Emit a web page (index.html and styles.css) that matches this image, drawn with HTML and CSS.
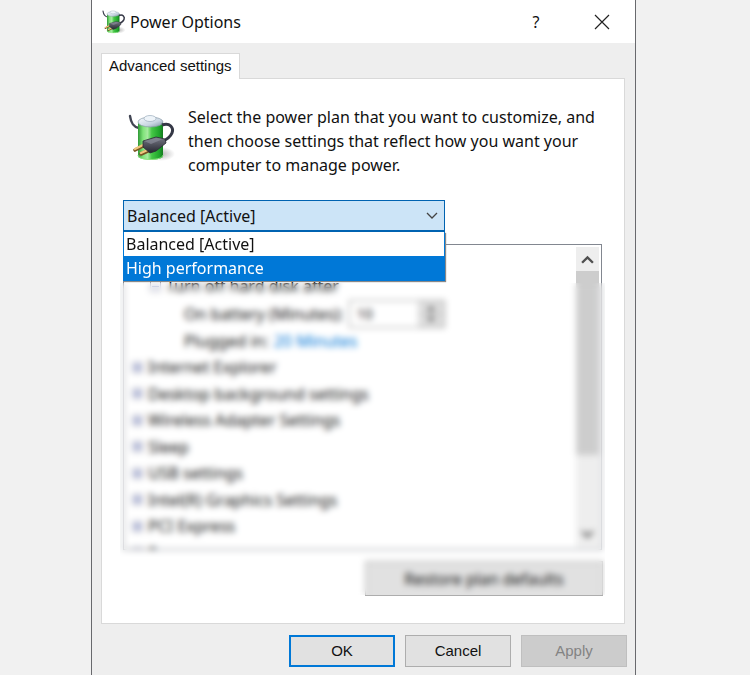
FILE: index.html
```html
<!DOCTYPE html>
<html lang="en">
<head>
<meta charset="utf-8">
<title>Power Options</title>
<link rel="stylesheet" href="styles.css">
</head>
<body>
<svg class="defs" width="0" height="0" aria-hidden="true">
  <defs>
    <linearGradient id="cell" x1="0" x2="1" y1="0" y2="0">
      <stop offset="0" stop-color="#2f9a35"/>
      <stop offset=".2" stop-color="#7fe37a"/>
      <stop offset=".38" stop-color="#a5eb9e"/>
      <stop offset=".55" stop-color="#45c746"/>
      <stop offset=".85" stop-color="#1fa52b"/>
      <stop offset="1" stop-color="#157a20"/>
    </linearGradient>
    <linearGradient id="cap" x1="0" x2="1" y1="0" y2="1">
      <stop offset="0" stop-color="#f8fbff"/>
      <stop offset=".6" stop-color="#c9d6e2"/>
      <stop offset="1" stop-color="#7f91a2"/>
    </linearGradient>
    <linearGradient id="plug" x1="0" x2="0" y1="0" y2="1">
      <stop offset="0" stop-color="#777985"/>
      <stop offset="1" stop-color="#25262f"/>
    </linearGradient>
    <radialGradient id="shade">
      <stop offset="0" stop-color="#888" stop-opacity=".6"/>
      <stop offset="1" stop-color="#888" stop-opacity="0"/>
    </radialGradient>
    <symbol id="battery" viewBox="0 0 48 48">
      <ellipse cx="33" cy="40" rx="14" ry="7" fill="url(#shade)"/>
      <path d="M2 2C3 9 5 13 11 14" fill="none" stroke="#414553" stroke-width="2.4" stroke-linecap="round"/>
      <path d="M10 8v34c0 5 25 5 25 0V8z" fill="url(#cell)"/>
      <path d="M10 41c0 6 25 6 25 0" fill="none" stroke="#8ce47f" stroke-width="1"/>
      <ellipse cx="22.500" cy="8" rx="12.500" ry="5" fill="url(#cap)" stroke="#8b9caa" stroke-width=".7"/>
      <ellipse cx="22" cy="4.500" rx="6" ry="3" fill="#eef4f9" stroke="#9cadbd" stroke-width=".7"/>
      <path d="M34 11c8-3 12 3 10 8-2 5-6 7-11 9" fill="none" stroke="#353846" stroke-width="3"/>
      <path d="M17 31L7 36M24 35l-11 5" stroke="#795423" stroke-width="3.600" stroke-linecap="round"/>
      <path d="M17 30L7 35M24 34l-11 5" stroke="#efc77d" stroke-width="2.200" stroke-linecap="round"/>
      <path d="M15 27l13-4 9 2 1 4-10 8-6 2-7-6z" fill="url(#plug)" stroke="#292a34" stroke-width=".8"/>
      <path d="M16 27l12-3 7 1-12 5z" fill="#8b8d99" opacity=".65"/>
    </symbol>
  </defs>
</svg>
<main class="dialog">
  <header class="titlebar">
    <svg class="title-icon" aria-hidden="true"><use href="#battery"/></svg>
    <h1>Power Options</h1>
    <button class="caption" type="button" aria-label="Help">?</button>
    <button class="caption close" type="button" aria-label="Close">
      <svg width="16" height="16" viewBox="0 0 16 16"><path d="M1 1l14 14M15 1L1 15" fill="none" stroke="#222" stroke-width="1.200"/></svg>
    </button>
  </header>
  <div class="body">
    <button class="tab" type="button">Advanced settings</button>
    <section class="panel">
      <div class="intro">
        <svg class="intro-icon" aria-hidden="true"><use href="#battery"/></svg>
        <p>Select the power plan that you want to customize, and then choose settings that reflect how you want your computer to manage power.</p>
      </div>
      <div class="combo">
        <select aria-label="Power plan"><option>Balanced [Active]</option></select>
        <svg class="chevron" viewBox="0 0 12 8" aria-hidden="true"><path d="M1 1l5 5 5-5" fill="none" stroke="#444" stroke-width="1.300"/></svg>
        <ul class="menu">
          <li>Balanced [Active]</li>
          <li class="chosen">High performance</li>
        </ul>
      </div>
      <div class="settings">
        <div class="tree">
          <ul class="rows">
            <li class="child"><i class="box"></i>Turn off hard disk after</li>
            <li class="leaf"><label for="minutes">On battery (Minutes):</label><span class="spin"><input id="minutes" value="10"><svg viewBox="0 0 26 26" aria-hidden="true"><path d="M9 10l4-5 4 5zM9 16l4 5 4-5z" fill="#555"/><path d="M0 13h26" stroke="#bbb"/></svg></span></li>
            <li class="leaf">Plugged in:<a href="#">20 Minutes</a></li>
            <li><i class="box plus"></i>Internet Explorer</li>
            <li><i class="box plus"></i>Desktop background settings</li>
            <li><i class="box plus"></i>Wireless Adapter Settings</li>
            <li><i class="box plus"></i>Sleep</li>
            <li><i class="box plus"></i>USB settings</li>
            <li><i class="box plus"></i>Intel(R) Graphics Settings</li>
            <li><i class="box plus"></i>PCI Express</li>
            <li><i class="box plus"></i>Processor</li>
          </ul>
          <div class="scroll">
            <svg viewBox="0 0 12 8" aria-hidden="true"><path d="M1 7l5-5 5 5" fill="none" stroke="#505050" stroke-width="2.200"/></svg>
            <div class="thumb"></div>
            <svg viewBox="0 0 12 8" aria-hidden="true"><path d="M1 1l5 5 5-5" fill="none" stroke="#505050" stroke-width="2.200"/></svg>
          </div>
        </div>
        <button class="push restore" type="button">Restore plan defaults</button>
        <div class="veil"></div>
      </div>
    </section>
    <footer>
      <button class="push primary" type="button">OK</button>
      <button class="push" type="button">Cancel</button>
      <button class="push" type="button" disabled>Apply</button>
    </footer>
  </div>
</main>
</body>
</html>
```

FILE: styles.css
```css
* { box-sizing: border-box; }
body {
  margin: 0;
  background: #f1f1f1;
  color: #111;
  font: 16px/24px "Noto Sans", "Open Sans", sans-serif;
}
button, select, input { font: inherit; color: inherit; }
ul { list-style: none; margin: 0; padding: 0; }
.defs { position: absolute; }
.dialog {
  margin: 0 114px 0 91px;
  min-height: 100vh;
  background: #eee;
  border: solid #68696d;
  border-width: 0 1px;
}
.titlebar {
  display: flex;
  align-items: center;
  height: 43px;
  padding-left: 10px;
  background: #fff;
}
.title-icon { width: 24px; height: 24px; margin-right: 4px; }
h1 { flex: 1; margin: 0; font-size: 16px; font-weight: 400; }
.caption {
  width: 66px;
  height: 43px;
  padding: 0;
  border: 0;
  background: none;
}
.close svg { display: block; margin: auto; }
.body { padding: 10px 8px 8px 9px; }
.tab {
  position: relative;
  display: block;
  height: 26px;
  margin-bottom: -1px;
  padding: 0 7px 2px;
  border: 1px solid #d9d9d9;
  border-bottom: 0;
  background: #fff;
  font-family: "Liberation Sans", Arial, sans-serif;
  font-size: 15px;
}
.panel {
  margin-right: 2px;
  padding: 26px 22px 27px 21px;
  border: 1px solid #d9d9d9;
  background: #fff;
}
.intro { display: flex; gap: 12px; padding-left: 5px; }
.intro-icon { flex: none; width: 48px; height: 48px; margin-top: 9px; }
.intro p { margin: 0; }
.combo {
  position: relative;
  width: 322px;
  margin: 23px 0 12px;
}
select {
  display: block;
  width: 100%;
  height: 32px;
  padding: 0 3px;
  appearance: none;
  border: 1px solid #0063b1;
  border-bottom-width: 2px;
  border-radius: 0;
  background: #cce4f7;
}
.chevron { position: absolute; right: 7px; top: 12px; width: 12px; height: 8px; }
.menu {
  position: absolute;
  z-index: 2;
  top: 32px;
  left: 0;
  right: 0;
  border: 1px solid #0078d7;
  border-top: 0;
  background: #fff;
  box-shadow: 1px 1px 1px #888;
}
.menu li { padding: 0 2px; }
.menu .chosen { background: #0078d7; color: #fff; }
.settings { position: relative; }
.tree {
  display: flex;
  height: 306px;
  border: 1px solid #828790;
  overflow: hidden;
}
.rows {
  flex: 1;
  display: grid;
  grid-auto-rows: 1fr;
  height: 293px;
  margin-top: 28px;
  padding-left: 8px;
}
.rows li { display: flex; align-items: center; gap: 5px; white-space: nowrap; }
.rows .child { padding-left: 18px; }
.rows .leaf { padding-left: 52px; }
.rows a { color: #0078d7; text-decoration: none; }
.box {
  width: 11px;
  height: 11px;
  border: 1px solid #a4a4b4;
  background: linear-gradient(#4b5ea8, #4b5ea8) center / 7px 1px no-repeat;
}
.plus {
  background:
    linear-gradient(#4b5ea8, #4b5ea8) center / 7px 1px no-repeat,
    linear-gradient(#4b5ea8, #4b5ea8) center / 1px 7px no-repeat,
    #e4e6f2;
}
.spin { display: flex; height: 28px; border: 1px solid #999; }
.spin input { width: 68px; padding: 0 7px; border: 0; background: #fff; font-size: 14px; }
.spin svg { width: 26px; height: 26px; background: #ddd; }
.scroll {
  display: flex;
  flex-direction: column;
  align-items: center;
  width: 23px;
  margin: 2px;
  padding-bottom: 8px;
  background: #eee;
}
.scroll svg { width: 13px; height: 9px; margin: 8px 0 7px; }
.thumb { width: 100%; height: 184px; margin-bottom: auto; background: #cdcdcd; }
.scroll svg:last-child { margin: 0; }
.push {
  width: 106px;
  height: 32px;
  padding: 0;
  border: 1px solid #adadad;
  background: #e1e1e1;
  font-family: "Liberation Sans", Arial, sans-serif;
  font-size: 15px;
}
.push:disabled { background: #ccc; border-color: #bfbfbf; color: #838383; }
.primary { border: 2px solid #0078d7; }
.restore {
  display: block;
  width: 238px;
  height: 35px;
  margin: 11px -1px 0 auto;
  font-family: "Noto Sans", "Open Sans", sans-serif;
  font-size: 16px;
}
.veil {
  position: absolute;
  inset: 39px -3px 1px;
  backdrop-filter: blur(3px);
}
footer { display: flex; justify-content: flex-end; gap: 10px; padding-top: 11px; }
```
